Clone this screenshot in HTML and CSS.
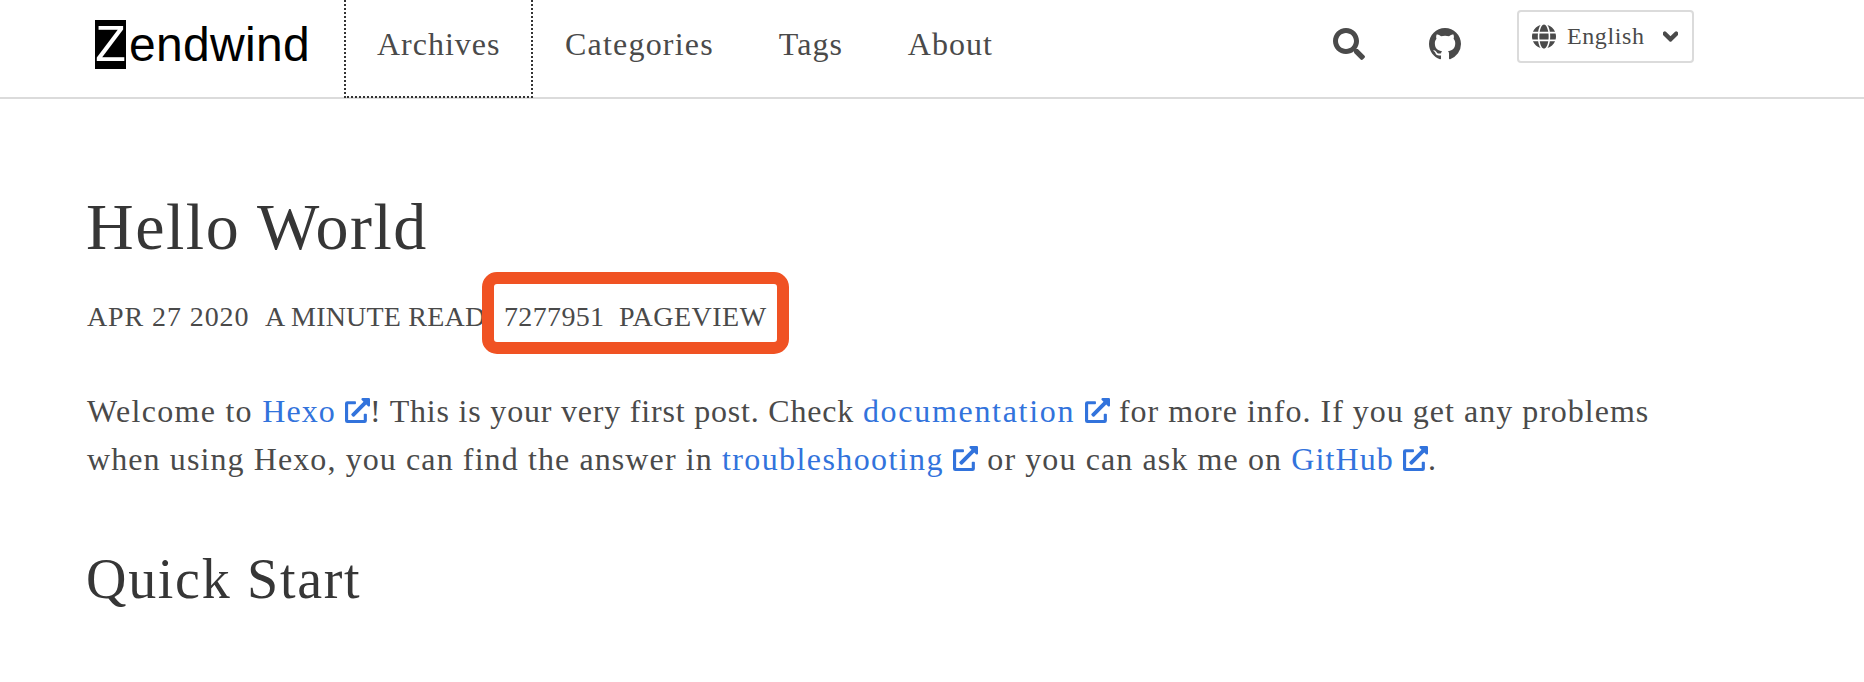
FILE: index.html
```html
<!DOCTYPE html>
<html lang="en">
<head>
<meta charset="utf-8">
<title>Hello World</title>
<link rel="stylesheet" href="styles.css">
</head>
<body>
<svg class="sprites" aria-hidden="true">
  <symbol id="ext" viewBox="0 0 512 512"><path fill="currentColor" d="M432,320H400a16,16,0,0,0-16,16V448H64V128H208a16,16,0,0,0,16-16V80a16,16,0,0,0-16-16H48A48,48,0,0,0,0,112V464a48,48,0,0,0,48,48H400a48,48,0,0,0,48-48V336A16,16,0,0,0,432,320ZM488,0h-128c-21.37,0-32.05,25.91-17,41l35.73,35.73L135,320.37a24,24,0,0,0,0,34L157.67,377a24,24,0,0,0,34,0L435.28,133.32,471,169c15,15,41,4.5,41-17V24A24,24,0,0,0,488,0Z"/></symbol>
</svg>
<header class="navbar">
  <a class="logo"><span class="logo-z">Z</span><span class="logo-rest">endwind</span></a>
  <nav class="menu">
    <a class="menu-item focused">Archives</a>
    <a class="menu-item wide">Categories</a>
    <a class="menu-item">Tags</a>
    <a class="menu-item">About</a>
  </nav>
  <div class="tools">
    <svg class="icon-search" viewBox="0 0 512 512"><path fill="currentColor" d="M505 442.7L405.3 343c-4.5-4.5-10.6-7-17-7H372c27.6-35.3 44-79.7 44-128C416 93.1 322.9 0 208 0S0 93.1 0 208s93.1 208 208 208c48.3 0 92.7-16.4 128-44v16.3c0 6.4 2.5 12.5 7 17l99.7 99.7c9.4 9.4 24.6 9.4 33.9 0l28.3-28.3c9.4-9.4 9.4-24.6.1-34zM208 336c-70.7 0-128-57.2-128-128 0-70.7 57.2-128 128-128 70.7 0 128 57.2 128 128 0 70.7-57.2 128-128 128z"/></svg>
    <svg class="icon-github" viewBox="0 0 16 16"><path fill="currentColor" d="M8 0C3.58 0 0 3.58 0 8c0 3.54 2.29 6.53 5.47 7.59.4.07.55-.17.55-.38 0-.19-.01-.82-.01-1.49-2.01.37-2.53-.49-2.69-.94-.09-.23-.48-.94-.82-1.13-.28-.15-.68-.52-.01-.53.63-.01 1.08.58 1.23.82.72 1.21 1.87.87 2.33.66.07-.52.28-.87.51-1.07-1.78-.2-3.64-.89-3.64-3.95 0-.87.31-1.59.82-2.15-.08-.2-.36-1.02.08-2.12 0 0 .67-.21 2.2.82.64-.18 1.32-.27 2-.27.68 0 1.36.09 2 .27 1.53-1.04 2.2-.82 2.2-.82.44 1.1.16 1.92.08 2.12.51.56.82 1.27.82 2.15 0 3.07-1.87 3.75-3.65 3.95.29.25.54.73.54 1.48 0 1.07-.01 1.93-.01 2.2 0 .21.15.46.55.38A8.013 8.013 0 0016 8c0-4.42-3.58-8-8-8z"/></svg>
    <div class="lang">
      <svg class="icon-globe" viewBox="0 0 496 512"><path fill="currentColor" d="M336.5 160C322 70.7 287.8 8 248 8s-74 62.7-88.5 152h177zM152 256c0 22.2 1.2 43.5 3.3 64h185.3c2.1-20.5 3.3-41.8 3.3-64s-1.2-43.5-3.3-64H155.3c-2.1 20.5-3.3 41.8-3.3 64zm324.7-96c-28.6-67.9-86.5-120.4-158-141.6 24.4 33.8 41.2 84.7 50 141.6h108zM177.2 18.4C105.8 39.6 47.8 92.1 19.3 160h108c8.7-56.9 25.5-107.8 49.9-141.6zM487.4 192H372.7c2.1 21 3.3 42.5 3.3 64s-1.2 43-3.3 64h114.6c5.5-20.5 8.6-41.8 8.6-64s-3.1-43.5-8.5-64zM120 256c0-21.5 1.2-43 3.3-64H8.6C3.2 212.5 0 233.8 0 256s3.2 43.5 8.6 64h114.6c-2-21-3.2-42.5-3.2-64zm39.5 96c14.5 89.3 48.7 152 88.5 152s74-62.7 88.5-152h-177zm159.3 141.6c71.4-21.2 129.4-73.7 158-141.6h-108c-8.8 56.9-25.6 107.8-50 141.6zM19.3 352c28.6 67.9 86.5 120.4 158 141.6-24.4-33.8-41.2-84.7-50-141.6h-108z"/></svg>
      <span class="lang-name">English</span>
      <svg class="icon-chevron" viewBox="0 0 448 512"><path fill="currentColor" stroke="currentColor" stroke-width="50" d="M207.029 381.476L12.686 187.132c-9.373-9.373-9.373-24.569 0-33.941l22.667-22.667c9.357-9.357 24.522-9.375 33.901-.04L224 284.505l154.745-154.021c9.379-9.335 24.544-9.317 33.901.04l22.667 22.667c9.373 9.373 9.373 24.569 0 33.941L240.971 381.476c-9.373 9.372-24.569 9.372-33.942 0z"/></svg>
    </div>
  </div>
</header>
<main class="post">
  <h1 class="title">Hello World</h1>
  <div class="meta"><span class="meta-date">APR 27 2020</span><span class="meta-read">A MINUTE READ</span><span class="meta-count">7277951</span><span class="meta-pv">PAGEVIEW</span><span class="highlight"></span></div>
  <p class="text"><span class="run-a">Welcome to </span><a class="link">Hexo <svg class="ext"><use href="#ext"/></svg></a><span class="run-b">! This is your very first post. Check </span><a class="link run-c">documentation <svg class="ext"><use href="#ext"/></svg></a><span class="run-d"> for more info. If you get any problems</span><br>when using Hexo, you can find the answer in <a class="link run-e">troubleshooting <svg class="ext"><use href="#ext"/></svg></a> or you can ask me on <a class="link">GitHub <svg class="ext"><use href="#ext"/></svg></a>.</p>
  <h2 class="subtitle">Quick Start</h2>
</main>
</body>
</html>
```
FILE: styles.css
```css
* { box-sizing: border-box; }
html, body { margin: 0; padding: 0; background: #fff; }
body { width: 1864px; height: 682px; overflow: hidden; font-family: "Liberation Serif", serif; color: #4a4a4a; }
.sprites { display: none; }

.navbar { display: flex; align-items: stretch; height: 99px; border-bottom: 2px solid #dbdbdb; padding: 0 170px 0 95px; }
.logo { display: flex; align-items: center; width: 250px; font-family: "Liberation Sans", sans-serif; font-size: 48px; color: #000; height: 97px; padding-bottom: 8px; }
.logo-z { display: block; width: 31px; height: 49px; line-height: 49px; background: #000; color: #fff; text-align: center; margin-right: 3px; font-size: 50px; }
.logo-rest { letter-spacing: 0.3px; }
.menu { display: flex; align-items: stretch; }
.menu-item { display: flex; align-items: center; padding: 0 32.5px 8px; font-size: 32px; letter-spacing: 1px; color: #4a4a4a; height: 97px; }
.menu-item.wide { letter-spacing: 1.2px; }
.menu-item.focused { border: 2px dotted #333; border-top: 0; height: 98px; padding: 0 30px 8px 31px; margin-left: -1px; }
.tools { display: flex; align-items: flex-start; margin-left: auto; }
.icon-search { width: 32px; height: 32px; margin-top: 28px; color: #4a4a4a; }
.icon-github { width: 32px; height: 32px; margin-top: 28px; margin-left: 64px; color: #4a4a4a; }
.lang { display: flex; align-items: center; width: 177px; height: 53px; margin-top: 10px; margin-left: 56px; border: 2px solid #dbdbdb; border-radius: 4px; padding: 0 0 0 13px; font-size: 24px; color: #4a4a4a; }
.icon-globe { width: 24px; height: 25px; }
.lang-name { margin-left: 11px; letter-spacing: 0.6px; }
.icon-chevron { width: 15px; height: 17px; margin-left: 18px; }

.post { padding: 0 0 0 87px; }
.title { margin: 91px 0 0; font-size: 66px; line-height: 74px; font-weight: 400; color: #363636; letter-spacing: 1.5px; margin-left: -1px; }
.meta { position: relative; display: flex; margin-top: 36px; font-size: 28px; line-height: 34px; white-space: nowrap; color: #4a4a4a; }
.meta-date { width: 178px; letter-spacing: 0.9px; }
.meta-read { width: 239px; letter-spacing: 0.2px; }
.meta-count { width: 115px; letter-spacing: 0.35px; }
.meta-pv { letter-spacing: 0.5px; }
.highlight { position: absolute; left: 395px; top: -28px; width: 307px; height: 82px; border: 12px solid #f05223; border-radius: 15px; }
.text { margin: 53px 0 0; font-size: 32px; line-height: 48px; white-space: nowrap; letter-spacing: 1.1px; color: #4a4a4a; }
.run-a { letter-spacing: 1.3px; }
.run-b { letter-spacing: 0.8px; }
.run-c { letter-spacing: 1.7px; }
.run-d { letter-spacing: 1px; }
.run-e { letter-spacing: 1.4px; }
.link { color: #3273dc; }
.ext { width: 25px; height: 25px; vertical-align: -1px; color: #3273dc; }
.subtitle { margin: 63px 0 0 -1px; font-size: 56px; line-height: 66px; font-weight: 400; color: #363636; letter-spacing: 1.7px; }
```
